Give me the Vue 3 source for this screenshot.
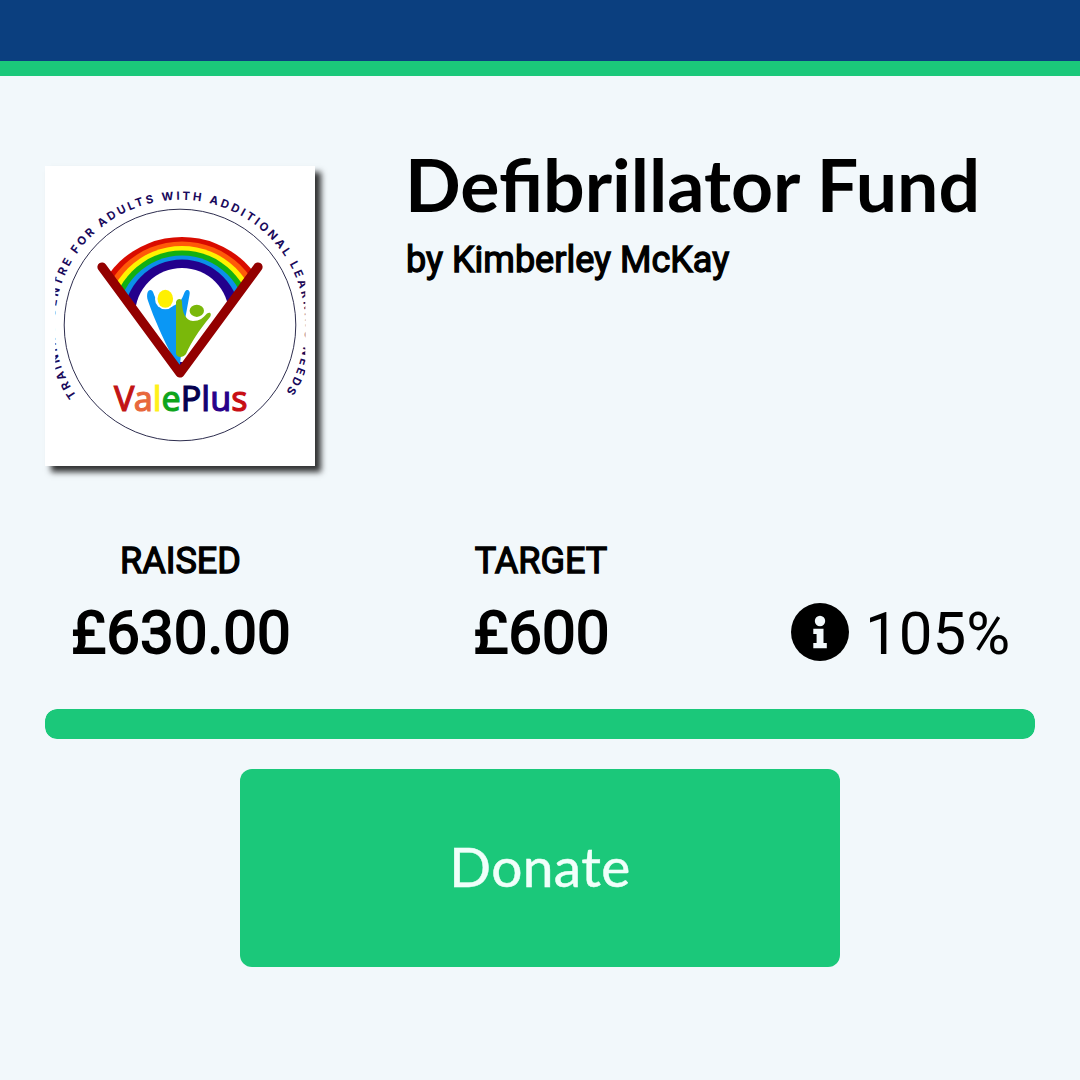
<template>
  <div class="page">
    <div class="topbar"></div>
    <main class="content">
      <header class="fund">
        <svg class="logo" viewBox="0 0 270 300" role="img" aria-label="ValePlus">
          <defs>
            <path id="ring" d="M31.4 229.9A125.4 125.4 0 1 1 242.5 223.7" />
            <clipPath id="crop"><rect x="10.3" y="0" width="250" height="300" /></clipPath>
            <clipPath id="fan"><path d="M57 101L0 20V0H270V20L213 101L135 208z" /></clipPath>
          </defs>
          <circle cx="135" cy="159" r="115.8" fill="none" stroke="#15153a" stroke-width=".9" />
          <g clip-path="url(#crop)">
            <text class="ring-text">
              <textPath href="#ring" textLength="539">TRAINING CENTRE FOR ADULTS WITH ADDITIONAL LEARNING NEEDS</textPath>
            </text>
          </g>
          <g clip-path="url(#fan)">
            <ellipse
              v-for="b in bands" :key="b.color"
              cx="137" :cy="b.cy" :rx="b.rx" :ry="b.ry" :fill="b.color"
            />
          </g>
          <path d="M102.4 127c1-4 5-4 6 0c4 13 16 18 26 9c4-4 4-9 6.5-11.5c3-1.5 4.5 1 3.5 5l-4 22l-5.5 47h-3c-5-8-21-40-29-64c-1-3-1-5-.5-7.5z" fill="#0a97f5" />
          <circle cx="120.3" cy="133" r="10.3" fill="#fff" />
          <ellipse cx="120.3" cy="132.8" rx="7.8" ry="9" fill="#fff000" />
          <path d="M131 136c1-4 6-4 6 0c0 9 3 19 11 19c7 0 10-3 14-7.5c3-2 5 0 3 3.5c-12 15-18 24-24 37c-3 4-9 4-10 0z" fill="#7ab80a" />
          <ellipse cx="151.8" cy="144.8" rx="7.2" ry="6.1" fill="#7ab80a" />
          <path d="M57 101L135 207L213 101" fill="none" stroke="#930000" stroke-width="9.2" stroke-linecap="round" stroke-linejoin="round" />
          <text class="brand" x="69" y="244.8">
            <tspan v-for="(l, i) in brand" :key="i" :fill="l[1]" :stroke="l[1]">{{ l[0] }}</tspan>
          </text>
        </svg>
        <div class="fund-info">
          <h1>Defibrillator Fund</h1>
          <p>by Kimberley McKay</p>
        </div>
      </header>

      <section class="stats">
        <div class="stat raised">
          <span class="label">RAISED</span>
          <span class="amount">£630.00</span>
        </div>
        <div class="stat target">
          <span class="label">TARGET</span>
          <span class="amount">£600</span>
        </div>
        <div class="percent">
          <svg class="info" viewBox="0 0 58 58">
            <circle cx="29" cy="29" r="29" fill="#000" />
            <circle cx="29" cy="18" r="5.2" fill="#f2f8fb" />
            <path d="M22.3 25.7h10.2v14.2h3.3v5.3H22.3v-5.3h3.3v-8.9h-3.3z" fill="#f2f8fb" />
          </svg>
          <span>105%</span>
        </div>
      </section>

      <div class="progress"><div class="bar" :style="{ width: Math.min(percent, 100) + '%' }"></div></div>
      <button class="donate">Donate</button>
    </main>
  </div>
</template>

<script setup>
const percent = 105

// rainbow, outside in
const bands = [
  { color: '#d90b00', cy: 155, rx: 88, ry: 84 },
  { color: '#ff5a08', cy: 155, rx: 82, ry: 79.5 },
  { color: '#fff200', cy: 155, rx: 76, ry: 75 },
  { color: '#12b012', cy: 155, rx: 70.5, ry: 70.5 },
  { color: '#0b8fe8', cy: 154, rx: 64.5, ry: 64.5 },
  { color: '#23008c', cy: 153, rx: 58.5, ry: 59.5 },
  { color: '#ffffff', cy: 149, rx: 47, ry: 47 },
]

const brand = [
  ['V', '#c21414'],
  ['a', '#e8683c'],
  ['l', '#fff01a'],
  ['e', '#0da51c'],
  ['P', '#05004f'],
  ['l', '#150070'],
  ['u', '#28008a'],
  ['s', '#c80d14'],
]
</script>

<style>
body {
  background: #f2f8fb;
}
</style>

<style scoped>
.page {
  height: 1080px;
  overflow: hidden;
  background: #f2f8fb;
  color: #000;
  font-family: Roboto, sans-serif;
}
.topbar {
  height: 61px;
  background: #0b3f7f;
  border-bottom: 15px solid #1bc87a;
}
.content {
  display: flex;
  flex-direction: column;
  padding: 90px 45px 0;
}
.fund {
  display: flex;
  gap: 91px;
  height: 300px;
}
.logo {
  width: 270px;
  height: 300px;
  flex-shrink: 0;
  background: #fff;
  box-shadow: 6px 6px 6px rgba(0, 0, 0, .8);
}
.ring-text {
  font: 700 11.4px Inter, sans-serif;
  fill: #1a0a5c;
}
.brand {
  font: 400 34px "Noto Sans", sans-serif;
  stroke-width: 1.1px;
}
.fund-info {
  white-space: nowrap;
}
h1 {
  margin: -26px 0 0 -1px;
  font: 700 73.4px/88px Lato, sans-serif;
}
p {
  margin: 11px 0 0;
  font-size: 36px;
  line-height: 42px;
  -webkit-text-stroke: 1.3px #000;
}
.stats {
  display: flex;
  height: 243px;
  padding-top: 73px;
  box-sizing: border-box;
}
.stat {
  display: flex;
  flex-direction: column;
  align-items: center;
}
.raised { width: 271px; }
.target { width: 450px; }
.label {
  font-size: 36px;
  line-height: 44px;
  -webkit-text-stroke: 1.3px #000;
}
.amount {
  margin: 15px 0 0 1px;
  font-size: 60px;
  line-height: 70px;
  -webkit-text-stroke: 1.9px #000;
}
.percent {
  display: flex;
  align-items: center;
  gap: 16px;
  height: 70px;
  margin: 58px 0 0 25px;
  font-size: 60px;
}
.percent span {
  padding-top: 2px;
}
.info {
  width: 58px;
  height: 58px;
  margin-top: -1px;
}
.progress {
  height: 30px;
  border-radius: 12px;
  overflow: hidden;
}
.bar {
  height: 100%;
  border-radius: 12px;
  background: #1bc87a;
}
.donate {
  align-self: center;
  width: 600px;
  height: 198px;
  margin-top: 30px;
  padding: 0 0 5px;
  border: none;
  border-radius: 12px;
  background: #1bc87a;
  color: #f0fffa;
  font: 400 55px Lato, sans-serif;
  letter-spacing: .4px;
  -webkit-text-stroke: .5px #f0fffa;
}
</style>
